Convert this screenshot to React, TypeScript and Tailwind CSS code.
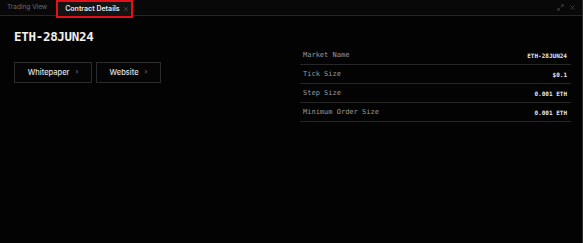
import { Maximize2, X } from "lucide-react";

const rows = [
  { label: "Market Name", value: "ETH-28JUN24" },
  { label: "Tick Size", value: "$0.1" },
  { label: "Step Size", value: "0.001 ETH" },
  { label: "Minimum Order Size", value: "0.001 ETH" },
];

export default function App() {
  return (
    <div className="w-[583px] h-[243px] bg-[#030303] flex flex-col overflow-hidden border-r border-[#2e2e2e] font-['Inter',sans-serif]">
      {/* Tab bar */}
      <div className="h-[16px] shrink-0 flex items-stretch justify-between border-b border-[#262626] bg-[#080808]">
        <div className="flex items-stretch">
          <div className="px-[7px] flex items-center text-[6.5px] text-[#6b6b6b]">Trading View</div>
          <div className="ml-[2px] h-[18px] border-2 border-[#e3101a] flex items-stretch">
            <div className="flex items-center gap-[3px] pl-[7px] pr-[2px] bg-[#141414] text-[7px] font-semibold text-[#e6e6e6]">
              <span>Contract Details</span>
              <X size={6} strokeWidth={2} className="text-[#6b6b6b]" />
            </div>
          </div>
        </div>
        <div className="flex items-center gap-[5px] pr-[6px] text-[#5a5a5a]">
          <Maximize2 size={7} strokeWidth={2} />
          <X size={7} strokeWidth={2} />
        </div>
      </div>

      {/* Content */}
      <div className="flex pt-[13px]">
        <div className="w-[300px] pl-[14px]">
          <div className="text-[12.5px] leading-[16px] font-bold text-[#f0f0f0] font-['DejaVu_Sans_Mono',monospace] tracking-[-0.3px]">
            ETH-28JUN24
          </div>
          <div className="flex gap-[4px] mt-[17px]">
            <button className="h-[21px] w-[78px] flex items-center justify-center gap-[6px] border border-[#2c2c2c] bg-[#050505] text-[7.5px] font-medium text-[#e0e0e0]">
              Whitepaper <span className="text-[#777] text-[7px]">›</span>
            </button>
            <button className="h-[21px] w-[65px] flex items-center justify-center gap-[6px] border border-[#2c2c2c] bg-[#050505] text-[7.5px] font-medium text-[#e0e0e0]">
              Website <span className="text-[#777] text-[7px]">›</span>
            </button>
          </div>
        </div>
        <div className="w-[271px] mt-[17px]">
          {rows.map((r) => (
            <div key={r.label} className="h-[19px] flex items-center justify-between pl-[3px] pr-[4px] border-b border-[#262626]">
              <span className="text-[7px] text-[#9a9a9a] font-['DejaVu_Sans_Mono',monospace]">{r.label}</span>
              <span className="text-[6px] font-bold text-[#e8e8e8] font-['DejaVu_Sans_Mono',monospace]">{r.value}</span>
            </div>
          ))}
        </div>
      </div>
    </div>
  );
}
